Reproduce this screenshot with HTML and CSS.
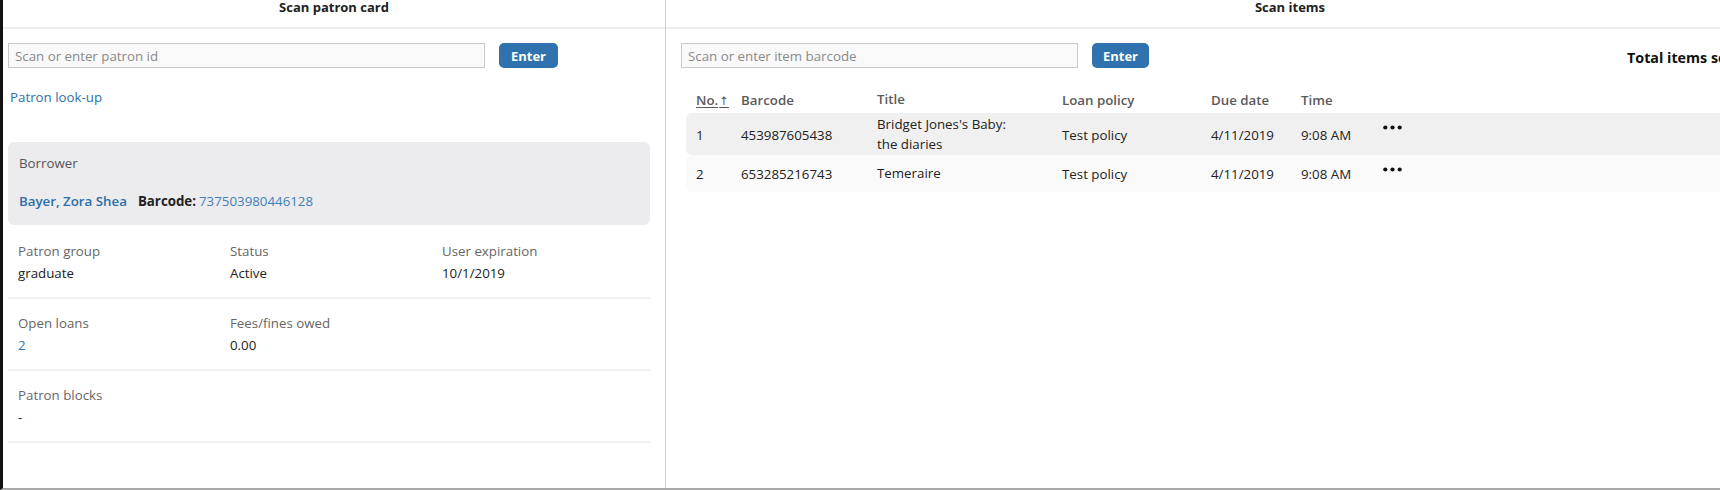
FILE: index.html
```html
<!DOCTYPE html>
<html lang="en">
<head>
<meta charset="utf-8">
<title>Check out</title>
<link rel="stylesheet" href="styles.css">
</head>
<body>
<div class="app">
  <section class="pane pane-left">
    <header class="pane-header">Scan patron card</header>
    <div class="pane-body left-body">
      <div class="scan-row">
        <input class="scan-input patron-input" type="text" placeholder="Scan or enter patron id">
        <button class="btn-primary btn-left" type="button">Enter</button>
      </div>
      <a class="lookup-link" href="#">Patron look-up</a>
      <div class="borrower-card">
        <div class="borrower-title">Borrower</div>
        <div class="borrower-row">
          <a class="borrower-name" href="#">Bayer, Zora Shea</a>
          <span class="barcode-label">Barcode:</span>
          <a class="barcode-value" href="#">737503980446128</a>
        </div>
      </div>
      <div class="detail-block">
        <div class="kv"><div class="kv-label">Patron group</div><div class="kv-value">graduate</div></div>
        <div class="kv"><div class="kv-label">Status</div><div class="kv-value">Active</div></div>
        <div class="kv"><div class="kv-label">User expiration</div><div class="kv-value">10/1/2019</div></div>
      </div>
      <div class="detail-block">
        <div class="kv"><div class="kv-label">Open loans</div><div class="kv-value"><a class="kv-link" href="#">2</a></div></div>
        <div class="kv"><div class="kv-label">Fees/fines owed</div><div class="kv-value">0.00</div></div>
      </div>
      <div class="detail-block">
        <div class="kv"><div class="kv-label">Patron blocks</div><div class="kv-value">-</div></div>
      </div>
    </div>
  </section>
  <section class="pane pane-right">
    <header class="pane-header">Scan items</header>
    <div class="pane-body right-body">
      <div class="scan-row">
        <input class="scan-input item-input" type="text" placeholder="Scan or enter item barcode">
        <button class="btn-primary btn-right" type="button">Enter</button>
        <div class="total">Total items scanned: 2</div>
      </div>
      <div class="items-table">
        <div class="t-row t-head">
          <div class="c c-no"><span class="sort">No.<span class="arrow">&#8593;</span></span></div>
          <div class="c c-barcode">Barcode</div>
          <div class="c c-title">Title</div>
          <div class="c c-policy">Loan policy</div>
          <div class="c c-due">Due date</div>
          <div class="c c-time">Time</div>
          <div class="c c-act"></div>
        </div>
        <div class="t-row t-body odd">
          <div class="c c-no">1</div>
          <div class="c c-barcode">453987605438</div>
          <div class="c c-title">Bridget Jones's Baby: the diaries</div>
          <div class="c c-policy">Test policy</div>
          <div class="c c-due">4/11/2019</div>
          <div class="c c-time">9:08 AM</div>
          <div class="c c-act"><svg class="dots" width="19" height="5" viewBox="0 0 19 5"><circle cx="2.3" cy="2.5" r="2.1"/><circle cx="9.5" cy="2.5" r="2.1"/><circle cx="16.7" cy="2.5" r="2.1"/></svg></div>
        </div>
        <div class="t-row t-body even">
          <div class="c c-no">2</div>
          <div class="c c-barcode">653285216743</div>
          <div class="c c-title">Temeraire</div>
          <div class="c c-policy">Test policy</div>
          <div class="c c-due">4/11/2019</div>
          <div class="c c-time">9:08 AM</div>
          <div class="c c-act"><svg class="dots" width="19" height="5" viewBox="0 0 19 5"><circle cx="2.3" cy="2.5" r="2.1"/><circle cx="9.5" cy="2.5" r="2.1"/><circle cx="16.7" cy="2.5" r="2.1"/></svg></div>
        </div>
      </div>
    </div>
  </section>
</div>
</body>
</html>
```
FILE: styles.css
```css
* { box-sizing: border-box; }
html, body { margin: 0; padding: 0; background: #fff; }
body {
  font-family: "Open Sans", "Noto Sans", sans-serif;
  font-size: 13.3px;
  line-height: 20px;
  color: #222;
  width: 1720px;
  height: 490px;
  overflow: hidden;
}
.app {
  display: flex;
  height: 490px;
  width: 1914px;
  border-left: 3px solid #111;
  border-bottom: 2px solid #a9a9a9;
}
.pane { display: flex; flex-direction: column; flex: none; }
.pane-left { width: 663px; border-right: 1px solid #cfcfcf; }
.pane-right { width: 1248px; }
.pane-header {
  height: 29px;
  border-bottom: 2px solid #ededed;
  text-align: center;
  font-weight: 700;
  font-size: 13px;
  line-height: 15px;
  color: #222;
}
.left-body { padding: 14px 15px 0 5px; }
.right-body { padding: 14px 16px 0 15px; }

.scan-row { display: flex; align-items: flex-start; gap: 14px; }
.scan-input {
  height: 25px;
  border: 1px solid #c9c9c9;
  background: #f9f9f9;
  padding: 0 6px;
  font: inherit;
  color: #222;
  outline: none;
}
.scan-input::placeholder { color: #8a8a8a; }
.patron-input { width: 477px; }
.item-input { width: 397px; }
.btn-primary {
  height: 25px;
  border: 0;
  border-radius: 5px;
  background: #2f72ad;
  color: #fff;
  font-family: inherit;
  font-weight: 700;
  font-size: 13px;
  padding: 0;
}
.btn-left { width: 59px; }
.btn-right { width: 57px; }
.total {
  margin-left: auto;
  width: 271px;
  margin-top: 5px;
  font-weight: 700;
  font-size: 14.3px;
  color: #111;
  white-space: nowrap;
}

.lookup-link {
  display: block;
  margin-top: 19px;
  padding-left: 2px;
  color: #2f70a8;
  text-decoration: none;
  width: max-content;
}
.borrower-card {
  margin-top: 35px;
  margin-bottom: 2px;
  background: #ececee;
  border-radius: 6px;
  padding: 11px 11px 14px;
}
.borrower-title { color: #555; }
.borrower-row { margin-top: 18px; display: flex; align-items: baseline; }
.borrower-name { color: #2b6ea8; font-weight: 600; text-decoration: none; margin-right: 11px; }
.barcode-label { font-weight: 700; color: #222; margin-right: 3px; }
.barcode-value { color: #3f7fb6; text-decoration: none; }

.detail-block {
  display: grid;
  grid-template-columns: repeat(3, 212px);
  padding: 14px 0 14px 10px;
  border-bottom: 2px solid #f0f0f0;
}
.kv-label { color: #666; }
.kv-value { margin-top: 2px; color: #222; }
.kv-link { color: #2b75bb; text-decoration: none; }

.items-table { margin: 19px 0 0 5px; }
.t-row { display: flex; align-items: center; padding-left: 10px; border-radius: 6px 0 0 6px; }
.t-head { height: 26px; color: #5a5a5a; font-weight: 600; }
.t-body { min-height: 37px; padding-top: 2px; padding-bottom: 1px; }
.odd { background: #f0f0f0; }
.even { background: #fafafa; }
.c { flex: none; }
.c-no { width: 45px; }
.c-barcode { width: 136px; }
.c-title { width: 185px; padding-right: 42px; line-height: 19.5px; }
.c-policy { width: 149px; }
.c-due { width: 90px; }
.c-time { width: 82px; }
.c-act { flex: 1; align-self: flex-start; padding-top: 10px; line-height: 0; }
.sort { text-decoration: underline; text-underline-offset: 2px; }
.arrow { font-family: "DejaVu Sans", sans-serif; font-size: 11.5px; font-weight: 400; margin-left: 1px; }
.dots { fill: #111; display: block; }
```
